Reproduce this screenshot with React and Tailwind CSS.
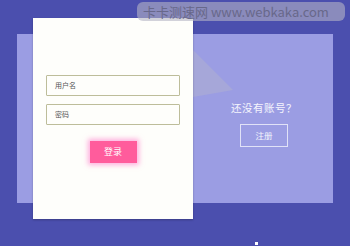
import React from 'react';

const font = { fontFamily: '"Noto Sans CJK SC", "Noto Sans", sans-serif' };

export default function App() {
  return (
    <div className="relative w-[350px] h-[246px] overflow-hidden bg-[#4b4fae] pt-[34px] pl-[17px]" style={font}>
      {/* back panel */}
      <div className="relative w-[316px] h-[169px] bg-[#9b9de3] flex">
        <svg className="absolute left-[176px] top-[16px]" width="42" height="48" viewBox="0 0 42 48">
          <polygon points="0,0 40,40 0,47" fill="#aeaed2" opacity="0.55" />
        </svg>
        <div className="w-[176px]" />
        <div className="flex-1 flex flex-col items-center pt-[67px] pl-[2px]">
          <p className="text-[10.5px] leading-[14px] text-white/90 tracking-[0.5px]">还没有账号？</p>
          <button className="mt-[9px] w-[48px] h-[23px] border border-white/70 text-[8.5px] text-white/90">注册</button>
        </div>
      </div>

      {/* login card */}
      <div className="absolute left-[33px] top-[18px] w-[160px] h-[201px] bg-[#fefefb] shadow-[0_1px_2px_rgba(0,0,0,0.25)] px-[13px] pt-[57px] flex flex-col">
        <div className="h-[21px] border border-[#bdbd9a] rounded-[1px] flex items-center pl-[8px] text-[7px] text-[#555]">用户名</div>
        <div className="mt-[8px] h-[21px] border border-[#bdbd9a] rounded-[1px] flex items-center pl-[8px] text-[7px] text-[#555]">密码</div>
        <div className="mt-[16px] flex justify-center">
          <button className="w-[47px] h-[22px] bg-[#ff5c9c] text-white text-[9px] shadow-[0_0_5px_2px_rgba(255,120,200,0.6)]">登录</button>
        </div>
      </div>

      {/* watermark */}
      <div className="absolute left-[137px] top-[2px] w-[208px] h-[19px] rounded-[6px] bg-[#b4b4c4]/60 flex items-center pl-[6px] text-[13px] leading-none text-[#68688a] whitespace-nowrap">
        卡卡测速网 www.webkaka.com
      </div>

      <div className="absolute left-[255px] top-[242px] w-[3px] h-[3px] bg-white" />
    </div>
  );
}
